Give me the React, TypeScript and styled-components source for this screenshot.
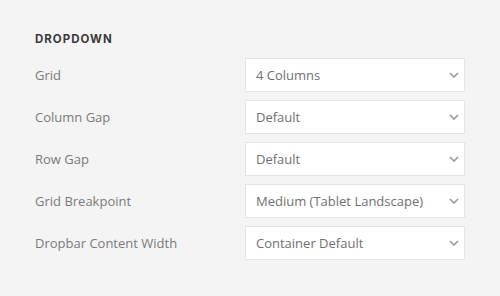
import styled, { createGlobalStyle } from 'styled-components'

const GlobalStyle = createGlobalStyle`
  html, body {
    margin: 0;
    padding: 0;
    background: #f4f4f4;
  }
`

const rows = [
  { label: 'Grid', value: '4 Columns' },
  { label: 'Column Gap', value: 'Default' },
  { label: 'Row Gap', value: 'Default' },
  { label: 'Grid Breakpoint', value: 'Medium (Tablet Landscape)' },
  { label: 'Dropbar Content Width', value: 'Container Default' },
]

export default function App () {
  return (
    <>
      <GlobalStyle />
      <Panel>
        <Heading>Dropdown</Heading>
        <Form>
          {rows.map(row => (
            <Row key={row.label}>
              <Label>{row.label}</Label>
              <Select>
                <span>{row.value}</span>
                <Chevron width="10" height="6" viewBox="0 0 10 6">
                  <path d="M1 1l4 4 4-4" fill="none" stroke="#999" strokeWidth="1.6" />
                </Chevron>
              </Select>
            </Row>
          ))}
        </Form>
      </Panel>
    </>
  )
}

const Panel = styled.div`
  width: 500px;
  height: 296px;
  box-sizing: border-box;
  padding: 33px 35px 0 35px;
  background: #f4f4f4;
  font-family: 'Open Sans', sans-serif;
`

const Heading = styled.h3`
  margin: 0 0 13px 0;
  font-family: Inter, 'Noto Sans', sans-serif;
  font-size: 11.5px;
  font-weight: 700;
  letter-spacing: 1px;
  text-transform: uppercase;
  color: #3a3a3a;
  line-height: 12px;
`

const Form = styled.div`
  display: flex;
  flex-direction: column;
  gap: 8px;
`

const Row = styled.div`
  display: grid;
  grid-template-columns: 210px 220px;
  align-items: center;
  height: 34px;
`

const Label = styled.div`
  font-size: 13px;
  color: #7a7a7a;
`

const Select = styled.div`
  height: 34px;
  box-sizing: border-box;
  border: 1px solid #e5e5e5;
  background: #fff;
  display: flex;
  align-items: center;
  justify-content: space-between;
  padding: 0 5px 0 10px;
  font-size: 13px;
  color: #707070;
`

const Chevron = styled.svg`
  flex: none;
`
